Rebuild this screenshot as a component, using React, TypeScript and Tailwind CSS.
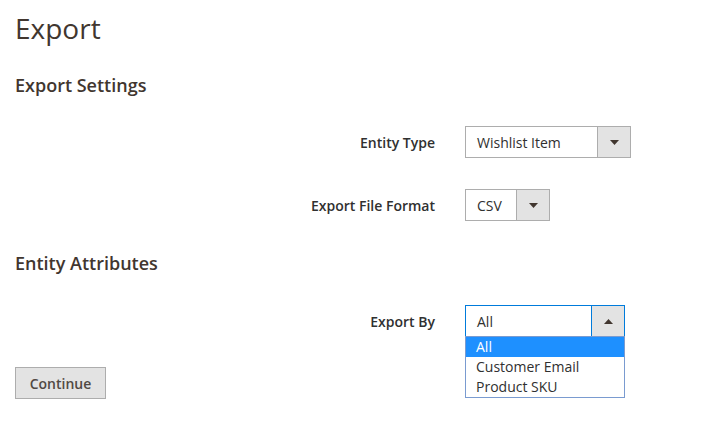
import React from "react";

const Caret = ({ up = false }: { up?: boolean }) => (
  <svg width="9" height="5" viewBox="0 0 9 5" className="block">
    {up ? <path d="M0 5 L4.5 0 L9 5 Z" fill="#41362f" /> : <path d="M0 0 L9 0 L4.5 5 Z" fill="#41362f" />}
  </svg>
);

type SelectProps = {
  value: string;
  width: string;
  open?: boolean;
};

const FakeSelect = ({ value, width, open = false }: SelectProps) => (
  <div
    className={`relative flex h-[32px] ${width} border bg-white ${
      open ? "border-[#007bdb]" : "border-[#adadad]"
    }`}
  >
    <div className="flex flex-1 items-center pl-[11px] text-[14px] text-[#303030]">{value}</div>
    <div
      className={`flex w-[33px] items-center justify-center border-l bg-[#e3e3e3] ${
        open ? "border-[#007bdb]" : "border-[#adadad]"
      }`}
    >
      <Caret up={open} />
    </div>
  </div>
);

const Row = ({ label, children, className = "" }: { label: string; children: React.ReactNode; className?: string }) => (
  <div className={`flex items-center ${className}`}>
    <div className="w-[450px] pr-[30px] text-right text-[14px] font-semibold text-[#303030]">{label}</div>
    {children}
  </div>
);

export default function App() {
  const options = ["All", "Customer Email", "Product SKU"];

  return (
    <div className="h-[421px] w-[717px] overflow-hidden bg-white px-[15px] font-['Open_Sans',sans-serif]">
      <h1 className="pt-[10px] text-[28px] font-normal leading-[36px] text-[#41362f]">Export</h1>

      <h2 className="mt-[27px] text-[18px] font-semibold leading-[24px] text-[#41362f]">Export Settings</h2>

      <Row label="Entity Type" className="mt-[29px]">
        <FakeSelect value="Wishlist Item" width="w-[166px]" />
      </Row>

      <Row label="Export File Format" className="mt-[31px]">
        <FakeSelect value="CSV" width="w-[85px]" />
      </Row>

      <h2 className="mt-[30px] text-[18px] font-semibold leading-[24px] text-[#41362f]">Entity Attributes</h2>

      <Row label="Export By" className="mt-[30px]">
        <div className="relative">
          <FakeSelect value="All" width="w-[160px]" open />
          {/* open native option list */}
          <ul className="absolute left-0 top-[31px] z-10 w-[160px] border border-[#7a9bd0] bg-white text-[14px] leading-[20px] text-[#303030]">
            {options.map((o, i) => (
              <li key={o} className={`pl-[10px] ${i === 0 ? "bg-[#1e90ff] text-white" : ""}`}>
                {o}
              </li>
            ))}
          </ul>
        </div>
      </Row>

      <button className="mt-[30px] h-[32px] w-[91px] border border-[#adadad] bg-[#e3e3e3] text-[14px] font-semibold text-[#514943]">
        Continue
      </button>
    </div>
  );
}
